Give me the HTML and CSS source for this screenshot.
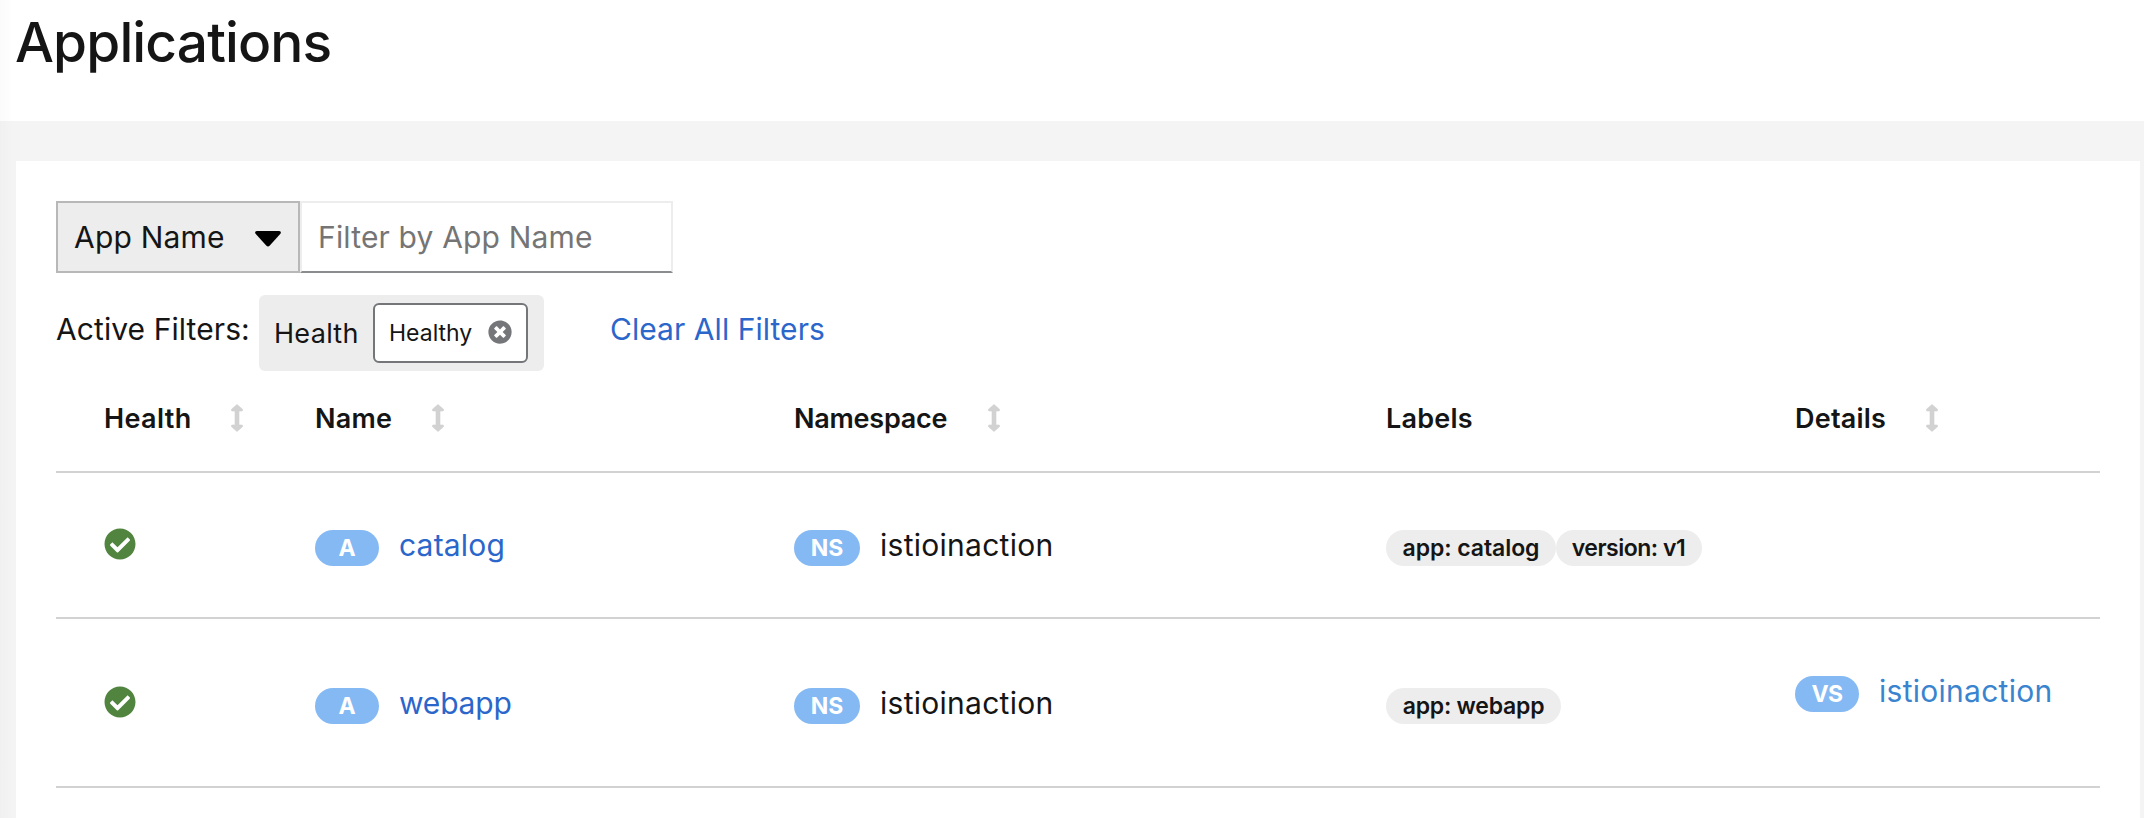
FILE: index.html
```
<!DOCTYPE html>
<html lang="en">
<head>
<meta charset="utf-8">
<title>Applications</title>
<link rel="stylesheet" href="styles.css">
</head>
<body>
<svg class="defs" aria-hidden="true">
  <symbol id="sort" viewBox="0 0 12 28">
    <path d="M6 0.5 11.5 5.2Q12 7 11 7H8V21H11Q12 21 11.5 22.8L6 27.5 0.5 22.8Q0 21 1 21H4V7H1Q0 7 0.5 5.2Z" fill="#d2d2d2" stroke="#d2d2d2" stroke-width=".6" stroke-linejoin="round"/>
  </symbol>
  <symbol id="ok" viewBox="0 0 512 512">
    <path d="M504 256c0 136.967-111.033 248-248 248S8 392.967 8 256 119.033 8 256 8s248 111.033 248 248zM227.314 387.314l184-184c6.248-6.248 6.248-16.379 0-22.627l-22.627-22.627c-6.248-6.249-16.379-6.249-22.628 0L216 308.118l-70.059-70.059c-6.248-6.248-16.379-6.248-22.628 0l-22.627 22.627c-6.248 6.248-6.248 16.379 0 22.627l104 104c6.249 6.249 16.379 6.249 22.628.001z" fill="#50843f"/>
  </symbol>
</svg>
<header class="masthead"><h1 class="title">Applications</h1></header>
<main class="page">
  <section class="card">
    <div class="toolbar">
      <button class="select" type="button"><span>App Name</span>
        <svg class="caret" viewBox="0 0 26 16"><path d="M1.8 0H24.2Q27 .6 25.2 3L14.8 14.6Q13 16.4 11.200 14.600L.8 3Q-1 .6 1.800 0Z"/></svg>
      </button>
      <input class="search" type="text" placeholder="Filter by App Name">
    </div>
    <div class="filters">
      <span class="filters-label">Active Filters:</span>
      <div class="group">
        <span class="group-label">Health</span>
        <div class="chip"><span>Healthy</span>
          <svg class="close" viewBox="0 0 512 512"><path d="M256 8C119 8 8 119 8 256s111 248 248 248 248-111 248-248S393 8 256 8zm121.600 313.100c4.700 4.700 4.700 12.300 0 17L338 377.600c-4.700 4.700-12.300 4.700-17 0L256 312l-65.100 65.600c-4.700 4.700-12.300 4.700-17 0L134.400 338c-4.700-4.700-4.700-12.300 0-17l65.600-65-65.600-65.100c-4.700-4.700-4.700-12.300 0-17l39.600-39.600c4.700-4.700 12.300-4.700 17 0l65 65.700 65.100-65.600c4.700-4.700 12.300-4.700 17 0l39.600 39.600c4.700 4.700 4.700 12.300 0 17L312 256l65.600 65.100z" fill="#75767a"/></svg>
        </div>
      </div>
      <a class="clear">Clear All Filters</a>
    </div>
    <div class="table">
      <div class="row head">
        <div class="cell"><span class="th th-health">Health</span><svg class="sort"><use href="#sort"/></svg></div>
        <div class="cell"><span class="th th-name">Name</span><svg class="sort"><use href="#sort"/></svg></div>
        <div class="cell"><span class="th th-ns">Namespace</span><svg class="sort"><use href="#sort"/></svg></div>
        <div class="cell"><span class="th th-plain">Labels</span></div>
        <div class="cell"><span class="th th-plain">Details</span><svg class="sort sort-details"><use href="#sort"/></svg></div>
      </div>
      <div class="row first">
        <div class="cell"><svg class="ok"><use href="#ok"/></svg></div>
        <div class="cell"><span class="badge">A</span><a class="link catalog">catalog</a></div>
        <div class="cell"><span class="badge ns">NS</span><span class="text">istioinaction</span></div>
        <div class="cell"><span class="label l-catalog">app: catalog</span><span class="label l-version">version: v1</span></div>
        <div class="cell"></div>
      </div>
      <div class="row second">
        <div class="cell"><svg class="ok"><use href="#ok"/></svg></div>
        <div class="cell"><span class="badge">A</span><a class="link webapp">webapp</a></div>
        <div class="cell"><span class="badge ns">NS</span><span class="text">istioinaction</span></div>
        <div class="cell"><span class="label l-webapp">app: webapp</span></div>
        <div class="cell details"><span class="badge vs">VS</span><a class="text vs-link">istioinaction</a></div>
      </div>
    </div>
  </section>
</main>
<div class="edge"></div>
</body>
</html>
```
FILE: styles.css
```
* { box-sizing: border-box; }
body { margin: 0; height: 818px; overflow: hidden; display: flex; flex-direction: column; background: #f4f4f4; color: #151515; font: 400 30px/36px Inter, "Liberation Sans", sans-serif; white-space: nowrap; }
.defs { position: absolute; width: 0; height: 0; }
.masthead { flex: none; height: 121px; padding: 10px 0 0 15px; background: #fff; }
.title { margin: 0; font-size: 55px; line-height: 64px; font-weight: 500; letter-spacing: -.87px; }
.page { flex: 1; display: flex; padding: 40px 4px 0 16px; }
.card { flex: 1; padding: 40px; background: #fff; }
.edge { position: absolute; left: 0; top: 0; width: 14px; height: 818px; background: linear-gradient(90deg, rgba(0,0,0,.015), rgba(0,0,0,0)); }

.toolbar { display: flex; height: 72px; }
.select { width: 244px; display: flex; align-items: center; justify-content: space-between; padding: 0 17px 0 16px; border: 2px solid #b8b8b8; background: #ededed; font: inherit; color: inherit; letter-spacing: .2px; }
.caret { width: 26px; height: 16px; margin-top: 3px; }
.search { width: 373px; margin: 0; padding: 0 16px; border: 2px solid #ededed; border-bottom-color: #8a8d90; font: inherit; letter-spacing: .17px; outline: 0; }
.search::placeholder { color: #757575; opacity: 1; }

.filters { display: flex; align-items: center; height: 76px; margin-top: 22px; }
.filters-label { width: 203px; margin-top: -8px; letter-spacing: .08px; }
.group { display: flex; align-items: center; width: 285px; height: 76px; padding-left: 15px; border-radius: 6px; background: #ededed; }
.group-label { width: 99px; margin-top: 2px; font-size: 27px; letter-spacing: .3px; }
.chip { display: flex; align-items: center; justify-content: space-between; width: 155px; height: 60px; padding: 0 14px; border: 2px solid #75767a; border-radius: 6px; background: #fff; font-size: 23px; }
.close { width: 24px; height: 24px; margin-top: -2px; }
.clear { margin: -8px 0 0 66px; color: #2b66cb; letter-spacing: .05px; }

.row { display: grid; grid-template-columns: 211px 479px 592px 409px 1fr; width: 2044px; padding-left: 48px; border-bottom: 2px solid #d2d2d2; }
.head { height: 102px; }
.first { height: 146px; }
.second { height: 169px; }
.cell { display: flex; align-items: center; }
.head .cell { padding-bottom: 6px; }
.th { margin-top: 2px; font-size: 27px; font-weight: 600; }
.th-health { width: 127px; letter-spacing: .35px; }
.th-name { width: 117px; letter-spacing: .23px; }
.th-ns { width: 194px; letter-spacing: -.24px; }
.th-plain { letter-spacing: .22px; }
.sort { width: 12px; height: 28px; }
.sort-details { margin-left: 40px; }
.ok { width: 32px; height: 32px; margin-top: -1px; }
.first .ok { margin-top: -2px; }
.badge, .label { height: 36px; margin-top: 6px; border-radius: 18px; font-size: 23px; line-height: 36px; text-align: center; }
.badge { width: 64px; margin-right: 20px; background: #84b9f3; color: #fff; font-weight: 700; }
.ns { width: 66px; }
.vs { letter-spacing: -.5px; }
.link { color: #2b66cb; }
.catalog { letter-spacing: .19px; }
.webapp { letter-spacing: -.18px; }
.text { letter-spacing: .27px; }
.label { background: #ededed; font-weight: 600; }
.l-catalog { width: 170px; letter-spacing: -.07px; }
.l-version { width: 146px; padding-right: 1px; letter-spacing: -.5px; }
.l-webapp { width: 175px; letter-spacing: -.22px; }
.details { padding-bottom: 23px; }
.vs-link { color: #3a84cf; }
```
